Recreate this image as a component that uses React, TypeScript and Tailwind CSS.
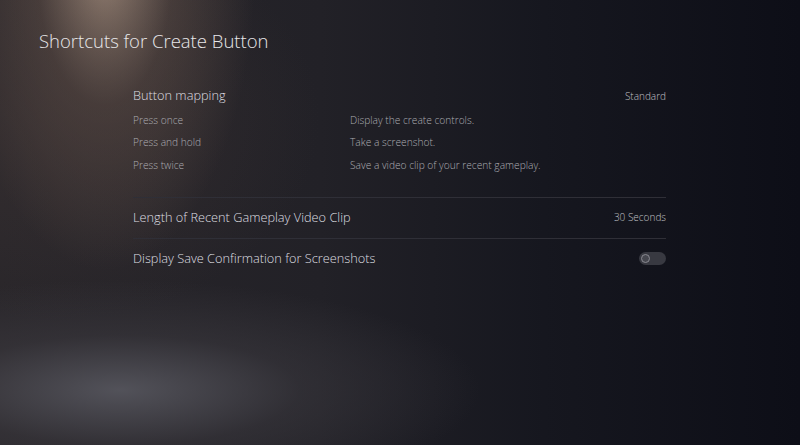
import React from 'react'

const rows = [
  { label: 'Press once', value: 'Display the create controls.' },
  { label: 'Press and hold', value: 'Take a screenshot.' },
  { label: 'Press twice', value: 'Save a video clip of your recent gameplay.' },
]

function Toggle() {
  return (
    <div className="w-[27px] h-[13px] rounded-full bg-[#383941] flex items-center px-[2px]">
      <div className="w-[9px] h-[9px] rounded-full border border-[#8a8a92] bg-[#46474f]" />
    </div>
  )
}

export default function App() {
  return (
    <div className="relative w-[800px] h-[445px] overflow-hidden bg-[#0d0e17] text-[#e0e0e2] font-['Open_Sans',sans-serif]">
      <div className="absolute inset-0 bg-[linear-gradient(90deg,#29262a_0%,#222127_40%,#16171f_68%,#0d0e17_100%)]" />
      <div className="absolute inset-0 bg-[radial-gradient(ellipse_150px_300px_at_105px_-30px,rgba(176,152,134,0.85)_0%,rgba(110,90,80,0.45)_45%,rgba(60,48,46,0)_100%)]" />
      <div className="absolute inset-0 bg-[radial-gradient(ellipse_260px_200px_at_60px_120px,rgba(70,58,56,0.4)_0%,rgba(50,42,42,0)_100%)]" />
      <div className="absolute inset-0 bg-[radial-gradient(ellipse_360px_110px_at_120px_390px,rgba(90,90,98,0.85)_0%,rgba(64,62,68,0.45)_50%,rgba(40,38,44,0)_100%)]" />

      <div className="relative flex flex-col">
        <h1 className="pl-[39px] pt-[29px] text-[18.5px] font-light leading-[24px] text-[#e8e8ea]">
          Shortcuts for Create Button
        </h1>

        <div className="ml-[133px] w-[533px] mt-[33px] flex flex-col">
          <div className="flex justify-between items-center h-[20px]">
            <span className="text-[12.75px] font-light text-[#dedee0]">Button mapping</span>
            <span className="text-[10px] font-light text-[#c0c0c4]">Standard</span>
          </div>
          <div className="flex flex-col mt-[3px]">
            {rows.map((r) => (
              <div key={r.label} className="flex items-center h-[22.5px] text-[10.2px] font-light text-[#acacb2]">
                <span className="w-[217px]">{r.label}</span>
                <span>{r.value}</span>
              </div>
            ))}
          </div>
          <div className="h-px bg-[#2f2f37] mt-[20px]" />
          <div className="flex justify-between items-center h-[40px]">
            <span className="text-[12.75px] font-light text-[#dedee0]">Length of Recent Gameplay Video Clip</span>
            <span className="text-[10px] font-light text-[#c0c0c4]">30 Seconds</span>
          </div>
          <div className="h-px bg-[#2f2f37]" />
          <div className="flex justify-between items-center h-[40px]">
            <span className="text-[12.75px] font-light text-[#dedee0]">Display Save Confirmation for Screenshots</span>
            <Toggle />
          </div>
        </div>
      </div>
    </div>
  )
}
